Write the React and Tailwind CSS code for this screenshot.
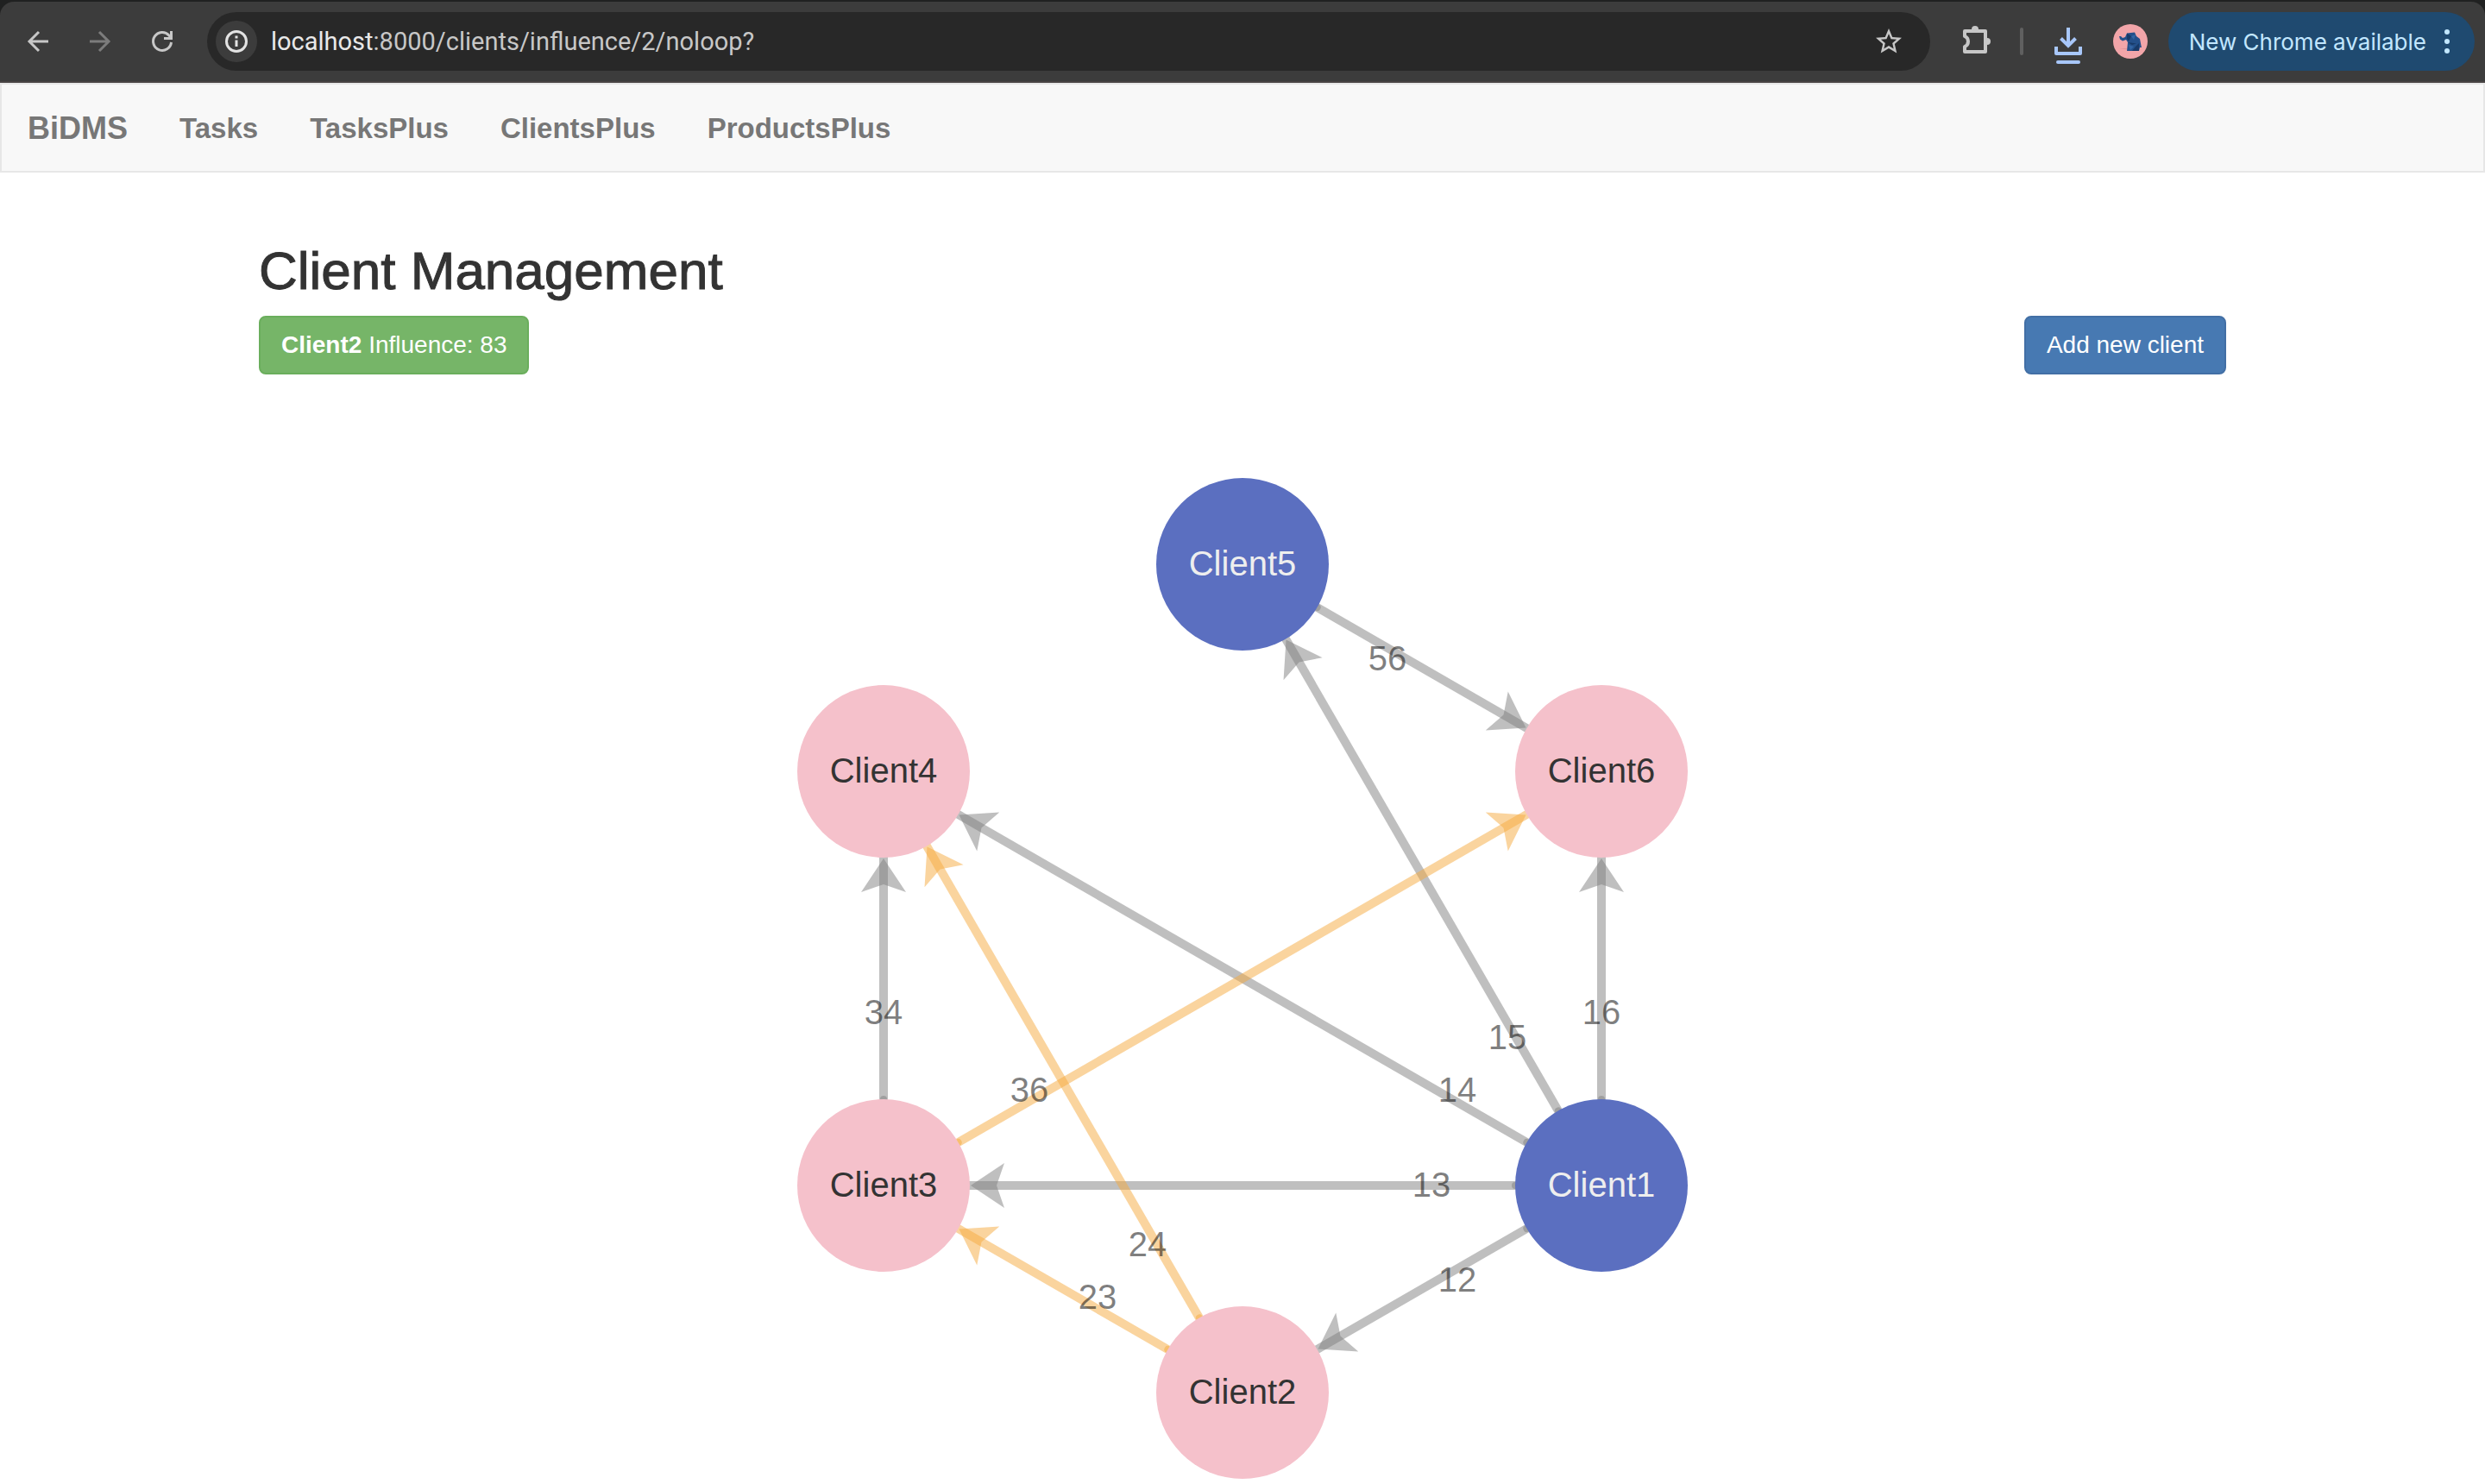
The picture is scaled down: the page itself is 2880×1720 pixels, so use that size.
const CENTER = { x: 1140, y: 584 };
const NODE_R = 100;

const NODES = {
  1: { x: 1556, y: 824, fill: "#5b6fc0", text: "#eeeeee" },
  2: { x: 1140, y: 1064, fill: "#f5c1cb", text: "#333333" },
  3: { x: 724, y: 824, fill: "#f5c1cb", text: "#333333" },
  4: { x: 724, y: 344, fill: "#f5c1cb", text: "#333333" },
  5: { x: 1140, y: 104, fill: "#5b6fc0", text: "#eeeeee" },
  6: { x: 1556, y: 344, fill: "#f5c1cb", text: "#333333" },
};

const GRAY = "#808080";
const ORANGE = "#f5aa3d";

const EDGES = [
  { from: 1, to: 2, color: GRAY, lx: 1389, ly: 947 },
  { from: 1, to: 3, color: GRAY, lx: 1359, ly: 837 },
  { from: 1, to: 4, color: GRAY, lx: 1389, ly: 727 },
  { from: 1, to: 5, color: GRAY, lx: 1447, ly: 666 },
  { from: 1, to: 6, color: GRAY, lx: 1556, ly: 637 },
  { from: 2, to: 3, color: ORANGE, lx: 972, ly: 967 },
  { from: 2, to: 4, color: ORANGE, lx: 1030, ly: 906 },
  { from: 3, to: 4, color: GRAY, lx: 724, ly: 637 },
  { from: 3, to: 6, color: ORANGE, lx: 893, ly: 727 },
  { from: 5, to: 6, color: GRAY, lx: 1308, ly: 227 },
];

function Edge({ from, to, color, lx, ly }) {
  const a = NODES[from];
  const b = NODES[to];
  const length = Math.hypot(b.x - a.x, b.y - a.y);
  const angle = (Math.atan2(b.y - a.y, b.x - a.x) * 180) / Math.PI;
  const tip = length - NODE_R - 1;
  return (
    <g>
      <g transform={`translate(${a.x} ${a.y}) rotate(${angle})`}>
        <line x1={NODE_R - 2} x2={length - NODE_R + 2} y1="0" y2="0" stroke={color} strokeWidth="10" strokeOpacity="0.5" />
        <circle cx={NODE_R} cy="0" r="4" fill={color} fillOpacity="0.5" />
        <path d={`M${tip} 0L${tip - 39} -26L${tip - 30} 0L${tip - 39} 26Z`} fill={color} fillOpacity="0.5" />
      </g>
      <text x={lx} y={ly} textAnchor="middle" fill="#000000" fillOpacity="0.5">
        {`${from}${to}`}
      </text>
    </g>
  );
}

function Graph() {
  return (
    <svg
      viewBox={`0 0 ${CENTER.x * 2} 1170`}
      className="block w-full text-[40px]"
      fontFamily="'Liberation Sans', Arial, sans-serif"
      role="img"
      aria-label="Client influence graph"
    >
      {EDGES.map((e) => (
        <Edge key={`${e.from}-${e.to}`} {...e} />
      ))}
      {Object.entries(NODES).map(([id, n]) => (
        <g key={id}>
          <circle cx={n.x} cy={n.y} r={NODE_R} fill={n.fill} />
          <text x={n.x} y={n.y + 13} textAnchor="middle" fill={n.text}>
            {`Client${id}`}
          </text>
        </g>
      ))}
    </svg>
  );
}

const ICON = { viewBox: "0 0 40 40", fill: "none", stroke: "currentColor", strokeWidth: 3, className: "size-10" };

function BrowserBar() {
  return (
    <div className="bg-[#202121] pt-0.5">
      <div className="flex h-[94px] items-center rounded-t-2xl border-b-2 border-[#484444] bg-[#3c3c3c] pr-3 pl-6 font-[Inter,sans-serif] text-[#c7c7c7]">
        <button aria-label="Back" className="size-10">
          <svg {...ICON}><path d="M32 20H10M21 9L10 20L21 31" /></svg>
        </button>
        <button aria-label="Forward" className="ml-8 size-10 text-[#7c7c7c]">
          <svg {...ICON}><path d="M8 20H30M19 9L30 20L19 31" /></svg>
        </button>
        <button aria-label="Reload" className="ml-8 size-10">
          <svg {...ICON}><path d="M30.500 21A10.500 10.500 0 1 1 27.800 12.900L30.500 16M30.500 8V16.500H22" /></svg>
        </button>
        <div className="ml-8 flex h-17 min-w-0 flex-1 items-center rounded-full bg-[#282828] pr-[30px] pl-[10px]">
          <button aria-label="Site information" className="grid size-12 shrink-0 place-items-center rounded-full bg-[#3c3c3c] text-[#e3e3e3]">
            <svg viewBox="0 0 28 28" fill="none" stroke="currentColor" strokeWidth="3" className="size-7">
              <circle cx="14" cy="14" r="11.500" />
              <path d="M14 12.500V20M14 7.500V10.500" />
            </svg>
          </button>
          <div className="ml-4 flex-1 text-[29px] leading-9 font-[Roboto,sans-serif]">
            <span className="text-[#e8e8e8]">localhost</span>:8000/clients/influence/2/noloop?
          </div>
          <button aria-label="Bookmark this page" className="size-9">
            <svg viewBox="0 0 24 24" fill="currentColor" className="size-9">
              <path d="M22 9.240l-7.190-.620L12 2 9.190 8.630 2 9.240l5.460 4.730L5.820 21 12 17.270 18.180 21l-1.630-7.030L22 9.240zM12 15.400l-3.760 2.270 1-4.280-3.320-2.880 4.380-.380L12 6.100l1.710 4.040 4.380.380-3.320 2.880 1 4.280L12 15.400z" />
            </svg>
          </button>
        </div>
        <button aria-label="Extensions" className="ml-8 size-10">
          <svg viewBox="0 0 40 40" className="size-10">
            <path d="M8 8H32V32H8V26A6.500 6.500 0 0 0 8 14Z" fill="none" stroke="currentColor" strokeWidth="4" strokeLinejoin="round" />
            <path d="M16 6A4 4 0 0 1 24 6ZM34 16A4 4 0 0 1 34 24Z" fill="currentColor" />
          </svg>
        </button>
        <div className="ml-8 h-8 w-1 rounded-full bg-[#606060]" />
        <button aria-label="Downloads" className="ml-7 h-14 w-12 text-[#a8c7fa]">
          <svg viewBox="0 0 48 56" fill="none" stroke="currentColor" strokeWidth="4" className="h-14 w-12">
            <path d="M24 12V32M15.500 24.500L24 33L32.500 24.500" />
            <path d="M10 34V42H38V34" strokeLinejoin="round" />
            <path d="M12 52H36" strokeLinecap="round" />
          </svg>
        </button>
        <button aria-label="Profile" className="ml-7 grid size-10 place-items-center rounded-full bg-[#f2a5a9]">
          <svg viewBox="0 0 40 40" className="size-10">
            <path d="M7 28H16V29.500Z" fill="#dd949b" />
            <path d="M7 14L9 14L11 16L14 15L16 10.500L25 9.500L27 14L31 17L32.500 25L33 27L31 27L30 31H16L17 21L15 18L11 19.500L8 17.500Z" fill="#24508a" />
            <path d="M16 10.500L21 14L18 20L16 17ZM17 21L27 22.500L22 24ZM26 26L30 22L30 31H22Z" fill="#183a68" />
            <path d="M21 14L26 12L24 18ZM18 24L24 26L20 30Z" fill="#3265a3" />
          </svg>
        </button>
        <button className="ml-6 flex h-17 items-center gap-5 rounded-full bg-[#1f4a70] pr-7 pl-6 text-[26px] text-[#c2e7ff]">
          New Chrome available
          <svg viewBox="0 0 8 30" fill="currentColor" className="h-[30px] w-2"><circle cx="4" cy="4" r="3" /><circle cx="4" cy="15" r="3" /><circle cx="4" cy="26" r="3" /></svg>
        </button>
      </div>
    </div>
  );
}

function NavBar() {
  const links = ["Tasks", "TasksPlus", "ClientsPlus", "ProductsPlus"];
  return (
    <nav className="flex h-[104px] items-center gap-15 border-2 border-[#e7e7e7] bg-[#f8f8f8] px-[30px] pt-0.5 text-[33px] font-bold text-[#777777]">
      <a href="#" className="text-[36px]">BiDMS</a>
      {links.map((l) => (
        <a key={l} href="#">{l}</a>
      ))}
    </nav>
  );
}

export default function App() {
  return (
    <div className="min-h-screen bg-white font-['Liberation_Sans',Arial,sans-serif] text-[#333333]">
      <BrowserBar />
      <NavBar />
      <main className="mx-auto w-full max-w-[2340px] px-[30px] pt-20">
        <h1 className="text-[62px] leading-[68px] font-medium [-webkit-text-stroke:1px_#333333]">Client Management</h1>
        <div className="mt-[18px] flex items-center justify-between text-[28px] leading-10 text-white">
          <button className="rounded-lg border-2 border-[#6aae5c] bg-[#76b568] px-6 py-3"><strong>Client2</strong> Influence: 83</button>
          <button className="rounded-lg border-2 border-[#426fa5] bg-[#4779b2] px-6 py-3">Add new client</button>
        </div>
        <div className="mt-29">
          <Graph />
        </div>
      </main>
    </div>
  );
}
